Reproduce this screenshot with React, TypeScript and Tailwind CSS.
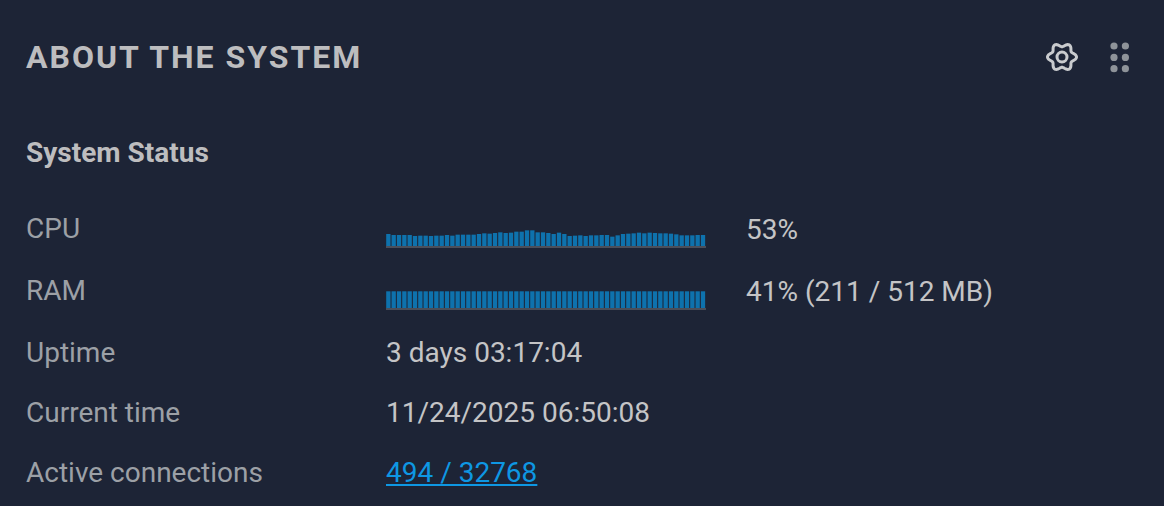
const cpuTops = [42,45,45,45,45,48,47,47,48,47,47,45,47,44,44,44,44,42,40,41,39,37,39,38,35,35,31,31,37,37,39,42,38,42,48,47,46,48,46,46,45,45,50,46,42,41,40,38,40,38,39,40,40,41,43,46,46,46,45,45];
const cpu = cpuTops.map((t) => (78 - t) / 3);
const ram = Array.from({ length: 60 }, () => 16.7);

function Spark({ values }: { values: number[] }) {
  return (
    <svg width="320" height="22" viewBox="0 0 320 22" className="mt-[16px] block">
      {values.map((h, i) => (
        <rect key={i} x={i * 5.333 + 0.2} y={20 - h} width={4.3} height={h} fill="#0e72ad" />
      ))}
      <rect x="0" y="20" width="320" height="2" fill="#4b4f5a" />
    </svg>
  );
}

function Row({ label, children, h }: { label: string; children: React.ReactNode; h: string }) {
  return (
    <div className={`flex items-center ${h}`}>
      <div className="w-[360px] text-[#9ca0a6]">{label}</div>
      {children}
    </div>
  );
}

const gearPath = (() => {
  const pts: string[] = [];
  for (let i = 0; i < 120; i++) {
    const t = (i / 120) * Math.PI * 2;
    const r = 12.6 + 1.9 * Math.cos(6 * t);
    pts.push(`${(17 + r * Math.cos(t)).toFixed(2)} ${(17 + r * 0.96 * Math.sin(t)).toFixed(2)}`);
  }
  return `M${pts.join("L")}Z`;
})();

export default function App() {
  return (
    <div className="w-[1164px] h-[506px] overflow-hidden bg-[#1d2436] px-[26px] font-['Roboto',sans-serif] text-[28px] leading-none text-[#c4c4c6]">
      <div className="flex h-[114px] items-center justify-between pr-[8px]">
        <h1 className="text-[32px] font-bold tracking-[2px] text-[#bdbdbf]">ABOUT THE SYSTEM</h1>
        <div className="flex items-center gap-[31px]">
          <svg width="34" height="34" viewBox="0 0 34 34" fill="none" stroke="#c9cbce" strokeWidth="3" strokeLinejoin="round">
            <path d={gearPath} />
            <circle cx="17" cy="17" r="5" />
          </svg>
          <svg width="20" height="31" viewBox="0 0 20 31" fill="#8e9399">
            <circle cx="4" cy="4" r="3.600" /><circle cx="15.400" cy="4" r="3.600" />
            <circle cx="4" cy="15.400" r="3.600" /><circle cx="15.400" cy="15.400" r="3.600" />
            <circle cx="4" cy="26.700" r="3.600" /><circle cx="15.400" cy="26.700" r="3.600" />
          </svg>
        </div>
      </div>
      <h2 className="mb-[30px] mt-[24px] text-[28px] font-bold leading-[30px] text-[#bdbdbf]">System Status</h2>
      <Row label="CPU" h="h-[62px]">
        <Spark values={cpu} />
        <span className="ml-[40px] mt-[1px]">53%</span>
      </Row>
      <Row label="RAM" h="h-[62px] mb-[1px]">
        <Spark values={ram} />
        <span className="ml-[40px] mt-[1px]">41% (211 / 512 MB)</span>
      </Row>
      <Row label="Uptime" h="h-[60px]"><span>3 days 03:17:04</span></Row>
      <Row label="Current time" h="h-[60px]"><span>11/24/2025 06:50:08</span></Row>
      <Row label="Active connections" h="h-[60px]"><a href="#" className="text-[#0e97e3] underline">494 / 32768</a></Row>
    </div>
  );
}
